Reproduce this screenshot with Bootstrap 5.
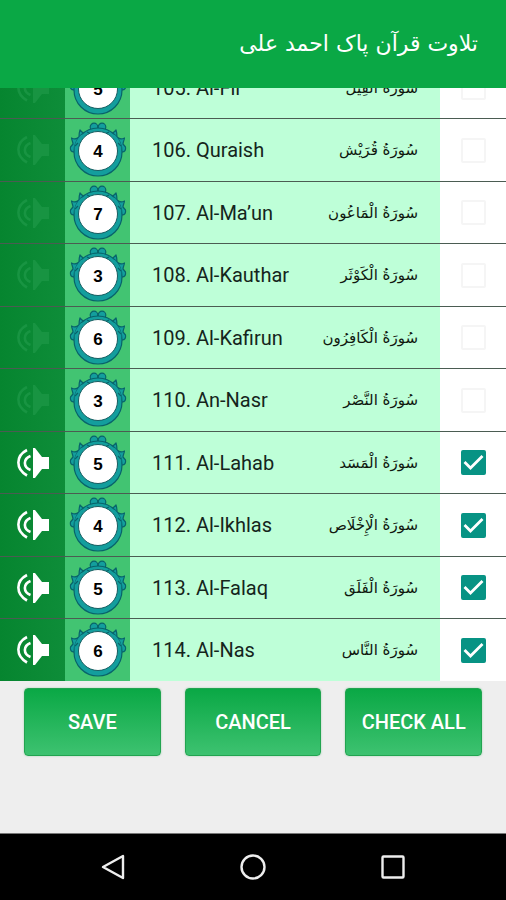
<!DOCTYPE html>
<html lang="en">
<head>
<meta charset="utf-8">
<meta name="viewport" content="width=device-width, initial-scale=1">
<title>تلاوت قرآن پاک احمد علی</title>
<link href="https://cdn.jsdelivr.net/npm/bootstrap@5.3.0/dist/css/bootstrap.min.css" rel="stylesheet">
<style>
  body { font-family: Roboto, "Noto Sans", sans-serif; background: #eee; }
  .app-bar { background: #0aa845; height: 88px; padding: 0 28px; }
  .app-title { font-family: "DejaVu Sans", sans-serif; font-size: 22px; line-height: 40px; }
  .surah-list { flex: 1 1 0; min-height: 0; }
  .surah { height: 63px; border-top: 1px solid #4b5c52; }
  .surah:nth-child(odd) { height: 62px; }
  .sound-cell { width: 65px; background: linear-gradient(90deg, #06852f, #0e8d39); }
  .sound-cell svg { width: 32px; height: 30px; color: #fff; }
  .sound-cell button:disabled { opacity: 1; border: 0; }
  .sound-cell button:disabled svg { color: #189442; }
  .count-cell { width: 65px; background: #42c472; }
  .medal { width: 58px; height: 56px; }
  .medal text { font: bold 17px "Liberation Sans", sans-serif; }
  .name-cell { background: #beffd8; padding: 0 22px; color: #15251c; }
  .latin { font-size: 20px; line-height: 24px; }
  .arabic { font-family: "DejaVu Sans", sans-serif; font-size: 15px; line-height: 30px; color: #10180f; }
  .check-cell { width: 66px; }
  .surah-check { appearance: none; width: 25px; height: 25px; margin: 0; border: 2px solid #f5f5f5; border-radius: 2px; background: #fff; }
  .surah-check:checked { border-color: #079384; background: #079384 url("data:image/svg+xml,%3Csvg xmlns='http://www.w3.org/2000/svg' viewBox='0 0 21 21'%3E%3Cpath d='M1.500 10l6 6L19.500 4' fill='none' stroke='white' stroke-width='2.800'/%3E%3C/svg%3E"); }
  .actions { padding: 7px 24px 77px; gap: 24px; }
  .btn-leaf { flex: 1 1 0; height: 68px; padding: 0; border: 1px solid #22a450; border-radius: 4px; background: linear-gradient(#0aa845, #3dc270); color: #fff; font-size: 20px; font-weight: 500; line-height: 24px; box-shadow: 0 0 2px #9ccdad; }
  .btn-leaf:hover { color: #fff; background: #0aa845; }
  .system-bar { height: 67px; padding: 0 43px; border-top: 1px solid #777; }
  .system-bar svg { width: 26px; height: 28px; fill: none; stroke: #eee; stroke-width: 2.4; stroke-linejoin: round; }
</style>
<script src="https://cdn.jsdelivr.net/npm/bootstrap@5.3.0/dist/js/bootstrap.bundle.min.js"></script>
</head>
<body>
<svg class="d-none" aria-hidden="true">
  <symbol id="speaker" viewBox="0 0 32 30">
    <path d="M16 0h2l7 9h7v12h-7l-7 9h-2z" fill="currentColor"/>
    <path d="M10 2C-1.500 8-1.500 21 10 27.500M13.500 8C6 11 6 19 13.500 22" fill="none" stroke="currentColor" stroke-width="2.600"/>
  </symbol>
  <symbol id="medal" viewBox="0 0 58 56">
    <g fill="#139e9d" stroke="#08636a" stroke-width="1.200" stroke-linejoin="round">
      <path d="M17 12C14 12 13 10 11 8C10 11 10 13 10 15C8 17 6 18 2.500 16C3 19 4 20 4 22L1.500 25C1 28 2 30 5 30L9 36L20 16zM41 12C44 12 45 10 47 8C48 11 48 13 48 15C50 17 52 18 55.500 16C55 19 54 20 54 22L56.500 25C57 28 56 30 53 30L49 36L38 16z"/>
      <circle cx="25" cy="5" r="3.800"/><circle cx="33" cy="5" r="3.800"/>
      <circle cx="29" cy="30" r="24"/>
      <path d="M12 13C6 20 4 24 7 32L14 28L22 11zM46 13C52 20 54 24 51 32L44 28L36 11z" stroke="none"/>
      <path d="M18 10l4 2M40 10l-4 2M6 24l3-3M52 24l-3-3" fill="none"/>
    </g>
    <circle cx="29" cy="29" r="19.500" fill="#fff" stroke="#175d61"/>
  </symbol>
</svg>

<div class="d-flex flex-column vh-100">
  <header class="app-bar d-flex align-items-center flex-shrink-0">
    <h1 class="app-title text-white text-end w-100 m-0 fw-normal" lang="ur" dir="ltr"><bdi>تلاوت قرآن پاک احمد علی</bdi></h1>
  </header>

  <main class="surah-list overflow-hidden d-flex flex-column justify-content-end">
    <div id="surahs"></div>
  </main>

  <div class="actions d-flex flex-shrink-0">
    <button type="button" class="btn btn-leaf">SAVE</button>
    <button type="button" class="btn btn-leaf">CANCEL</button>
    <button type="button" class="btn btn-leaf">CHECK ALL</button>
  </div>

  <nav class="system-bar bg-black d-flex justify-content-around align-items-center flex-shrink-0" aria-label="System">
    <button type="button" class="btn p-0 border-0 lh-1" aria-label="Back"><svg viewBox="0 0 26 28"><path d="M3 14L23 3v22z"/></svg></button>
    <button type="button" class="btn p-0 border-0 lh-1" aria-label="Home"><svg viewBox="0 0 26 28"><circle cx="13" cy="14" r="11.500"/></svg></button>
    <button type="button" class="btn p-0 border-0 lh-1" aria-label="Recent apps"><svg viewBox="0 0 26 28"><rect x="2.500" y="3.500" width="21" height="21" rx="1"/></svg></button>
  </nav>
</div>

<script>
  const surahs = [
    [105, "Al-Fil", "سُورَةُ الْفِيل", 5, false],
    [106, "Quraish", "سُورَةُ قُرَيْش", 4, false],
    [107, "Al-Ma’un", "سُورَةُ الْمَاعُون", 7, false],
    [108, "Al-Kauthar", "سُورَةُ الْكَوْثَر", 3, false],
    [109, "Al-Kafirun", "سُورَةُ الْكَافِرُون", 6, false],
    [110, "An-Nasr", "سُورَةُ النَّصْر", 3, false],
    [111, "Al-Lahab", "سُورَةُ الْمَسَد", 5, true],
    [112, "Al-Ikhlas", "سُورَةُ الْإِخْلَاص", 4, true],
    [113, "Al-Falaq", "سُورَةُ الْفَلَق", 5, true],
    [114, "Al-Nas", "سُورَةُ النَّاس", 6, true]
  ];
  document.getElementById("surahs").innerHTML = surahs.map(([id, latin, arabic, verses, on]) => `
    <div class="surah d-flex">
      <div class="sound-cell d-flex align-items-center justify-content-center flex-shrink-0">
        <button type="button" class="btn p-0 border-0 lh-1" aria-label="Play ${latin}" ${on ? "" : "disabled"}><svg><use href="#speaker"/></svg></button>
      </div>
      <div class="count-cell d-flex align-items-center justify-content-center flex-shrink-0">
        <svg class="medal" viewBox="0 0 58 56"><use href="#medal"/><text x="29" y="35" text-anchor="middle">${verses}</text></svg>
      </div>
      <label class="name-cell d-flex align-items-center justify-content-between flex-grow-1" for="surah-${id}">
        <span class="latin">${id}. ${latin}</span>
        <span class="arabic" lang="ar" dir="rtl">${arabic}</span>
      </label>
      <div class="check-cell bg-white d-flex align-items-center justify-content-center flex-shrink-0">
        <input type="checkbox" class="surah-check" id="surah-${id}" ${on ? "checked" : ""}>
      </div>
    </div>`).join("");
</script>
</body>
</html>
